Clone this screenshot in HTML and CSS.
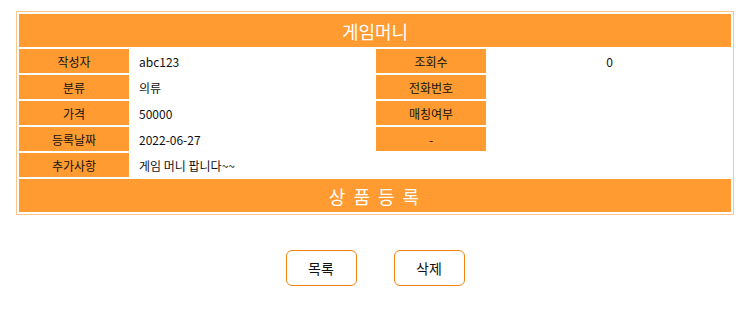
FILE: index.html
```html
<!DOCTYPE html>
<html>
<head>
  <title>상품 상세</title>
  <link rel="stylesheet" href="styles.css">
</head>
<body>
  <table class="detail">
    <colgroup>
      <col class="c-label">
      <col class="c-value">
      <col class="c-label">
      <col class="c-value2">
    </colgroup>
    <tr>
      <th colspan="4" class="title">게임머니</th>
    </tr>
    <tr>
      <td class="label">작성자</td>
      <td class="value">abc123</td>
      <td class="label">조회수</td>
      <td class="value center">0</td>
    </tr>
    <tr>
      <td class="label">분류</td>
      <td class="value">의류</td>
      <td class="label">전화번호</td>
      <td class="value center"></td>
    </tr>
    <tr>
      <td class="label">가격</td>
      <td class="value">50000</td>
      <td class="label">매칭여부</td>
      <td class="value center"></td>
    </tr>
    <tr>
      <td class="label">등록날짜</td>
      <td class="value">2022-06-27</td>
      <td class="label">-</td>
      <td class="value center"></td>
    </tr>
    <tr>
      <td class="label">추가사항</td>
      <td class="value" colspan="3">게임 머니 팝니다~~</td>
    </tr>
    <tr>
      <th colspan="4" class="title spaced">상 품 등 록</th>
    </tr>
  </table>

  <div class="buttons">
    <button>목록</button>
    <button>삭제</button>
  </div>
</body>
</html>
```

FILE: styles.css
```css
body {
  font-family: "Noto Sans CJK KR", "Noto Sans", sans-serif;
  margin: 0;
  padding: 11px 0 0 16px;
  background: #fff;
}
.detail {
  width: 716px;
  table-layout: fixed;
  border: 1px solid #ffc58a;
  border-spacing: 2px;
  font-size: 12px;
  color: #111;
}
.c-label {
  width: 110px;
}
.c-value {
  width: 243px;
}
.c-value2 {
  width: 243px;
}
.detail td,
.detail th {
  padding: 0;
}
.title {
  background: #ff9b30;
  color: #fff;
  font-size: 18px;
  font-weight: normal;
  height: 33px;
}
.spaced {
  letter-spacing: 2px;
}
.label {
  background: #ff9b30;
  text-align: center;
  height: 24px;
}
.value {
  padding-left: 8px !important;
}
.center {
  text-align: center;
  padding-left: 0 !important;
}
.buttons {
  display: flex;
  justify-content: center;
  gap: 37px;
  margin-top: 35px;
  padding-right: 16px;
}
.buttons button {
  width: 71px;
  height: 36px;
  background: #fff;
  border: 1px solid #ef8410;
  border-radius: 6px;
  font-family: "Noto Sans CJK KR", sans-serif;
  font-size: 14px;
  color: #111;
  cursor: pointer;
}
```
